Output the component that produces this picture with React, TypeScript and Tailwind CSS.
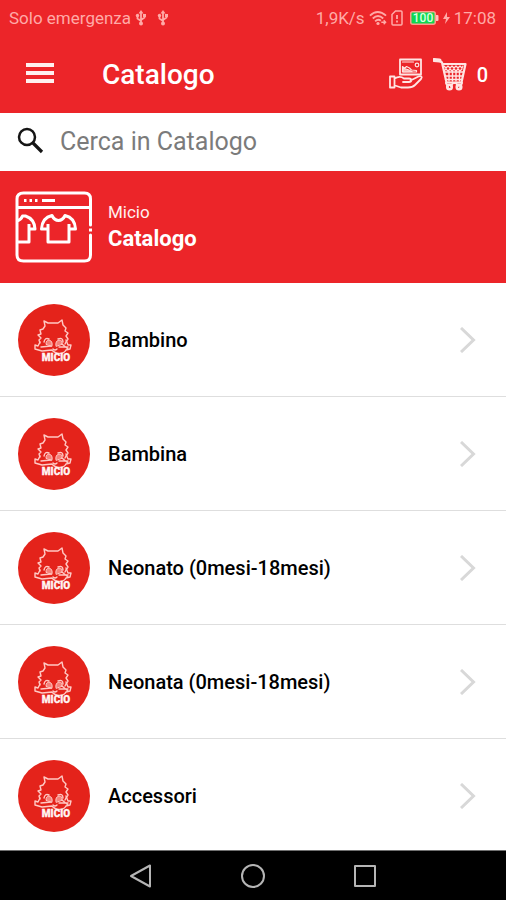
import React from "react";

const categories = [
  "Bambino",
  "Bambina",
  "Neonato (0mesi-18mesi)",
  "Neonata (0mesi-18mesi)",
  "Accessori",
];

function UsbIcon() {
  return (
    <svg className="h-[18px] w-3" viewBox="0 0 12 18" fill="none" stroke="currentColor" strokeWidth="1.800" aria-hidden="true">
      <path d="M6 3v11M6 12L2.500 9.500V7M6 11l3.500-2.500V6" />
      <path d="M6 1l2.500 3.500h-5z" fill="currentColor" stroke="none" />
      <circle cx="6" cy="14.500" r="2" fill="currentColor" stroke="none" />
      <circle cx="2.500" cy="6.500" r="1.700" fill="currentColor" stroke="none" />
      <path d="M8 5h3v3H8z" fill="currentColor" stroke="none" />
    </svg>
  );
}

function WifiIcon() {
  return (
    <svg className="h-[18px] w-[18px]" viewBox="0 0 19 18" fill="none" stroke="currentColor" strokeWidth="2" aria-hidden="true">
      <path d="M1 6.500Q9 -1 18 6.500M4 9.500Q9.500 4.500 15 9.500M6.500 12.500Q9.500 9.500 12.500 12" />
      <circle cx="9.500" cy="14.800" r="1.700" fill="currentColor" stroke="none" />
      <path d="M13 13.500h5M15.500 11.500l2 2-2 2" strokeWidth="1.500" />
    </svg>
  );
}

function SimIcon() {
  return (
    <svg className="h-4 w-3" viewBox="0 0 12 16" fill="none" stroke="currentColor" strokeWidth="1.500" aria-hidden="true">
      <path d="M1 4.500L4.500 1H10q1 0 1 1v12q0 1-1 1H2q-1 0-1-1z" />
      <path d="M6 5v4M6 10.500v2" strokeWidth="1.800" />
    </svg>
  );
}

function Battery() {
  return (
    <svg className="h-[14px] w-[29px]" viewBox="0 0 29 14" role="img" aria-label="100%">
      <rect x="0.750" y="0.750" width="24.500" height="12.500" rx="2" fill="#0fd850" stroke="#ff9a8c" strokeWidth="1.500" />
      <path d="M26 4h1.500q1 0 1 1v4q0 1-1 1H26z" fill="#ffc0bd" />
      <text x="13" y="11" textAnchor="middle" fontFamily="Roboto, sans-serif" fontWeight="500" fontSize="12" fill="#d9ffe2">100</text>
    </svg>
  );
}

function HandCardIcon() {
  return (
    <svg className="h-[34px] w-9" viewBox="1 1 36 34" fill="none" stroke="#ffe5e3" strokeWidth="1.800" strokeLinejoin="round" strokeLinecap="round" aria-hidden="true">
      <path d="M12 2.500h21v15H12z" />
      <path d="M14.500 5h11M14.500 15V9.500l2 2 2-2 3 1.500 2 2 5 .5v1.500z" strokeWidth="1.200" />
      <path d="M15 14.500v-3l3 .5 3 1 3 1.500z" fill="#ffb9b5" strokeWidth="1" />
      <circle cx="29" cy="8" r="1.800" strokeWidth="1.200" />
      <path d="M2 19.500h4.500v11H2zM6.500 21.500c4-2.500 7-2 9.500 0h5c3 0 3 3.500 0 3.500h-6M22.500 23.500l8-4c3-1 4 .5 2.500 2.500l-6 6c-2 2-4 2.500-7 2.500h-7l-6-2" />
    </svg>
  );
}

function CartIcon() {
  return (
    <svg className="h-[34px] w-9" viewBox="1 1 36 34" fill="none" stroke="#ffe5e3" strokeLinejoin="round" strokeLinecap="round" aria-hidden="true">
      <path d="M2 3l5.500 .5" strokeWidth="4" />
      <path d="M7 3.500l3 2 4.500 20H29M10.500 7H33.500l-4 18.500" strokeWidth="2.200" />
      <path d="M12 9l2 2 2-2 2 2 2-2 2 2 2-2 2 2 2-2 2 2 1-2M12 14l2-2 2 2 2-2 2 2 2-2 2 2 2-2 2 2 2-2" strokeWidth="1.200" />
      <path d="M12.500 15H31M13 19h18M13.500 22.500H30M17 14v10M20.500 14v10M24 14v10M27.500 14v10" strokeWidth="1.400" />
      <path d="M14 26l2 4M30 26l-2 4M19 29l2-3h3l2 3" strokeWidth="2" />
      <circle cx="17.500" cy="30" r="2.300" strokeWidth="2.500" />
      <circle cx="27" cy="30" r="2.300" strokeWidth="2.500" />
    </svg>
  );
}

function CatalogIcon() {
  return (
    <svg className="h-[72px] w-[78px] shrink-0" viewBox="0 0 78 72" fill="none" stroke="white" strokeWidth="3" strokeLinejoin="round" aria-hidden="true">
      <path d="M75.500 34V8q0-6-6-6H8.500Q2 2 2 8v56q0 6 6.500 6h61q6 0 6-6V44M2 16.500h73.500" strokeLinecap="round" />
      <path d="M74 39h3M9 9.500h2.500M14.500 9.500H17M20 9.500h2.500M27 9.500h13" />
      <path d="M2 30q4-1 5.500-5l3 0q9 3 9.500 13h-6v-5M14 36v15H2" />
      <path d="M37 24.500C30 26 27 30 26.500 38H33v13h21V38h6.500C60 30 57 26 50 24.500C47 31 40 31 37 24.500zM33 38v-5M54 38v-5" />
    </svg>
  );
}

function MicioBadge() {
  return (
    <svg className="h-[72px] w-[72px] shrink-0" viewBox="0 0 72 72" fill="none" aria-hidden="true">
      <circle cx="36" cy="36" r="36" fill="#e4231b" />
      <g stroke="#ffc9c4" strokeWidth="1.400" strokeLinejoin="round" strokeLinecap="round">
        <path d="M22 39l-1-3 2-2-3-3 3-1-1-4 3-1 2-3-1-5 4 2 5 0 5 0 4-3 1 5 3 3-1 3 3 2-2 3 2 3-2 3-1 2" />
        <path d="M22 38l-2 4-3-1 0 4 7 2 10-1c4 5 12 4 14 0M48 36l2 5 3 0-1 4-4 1" />
        <path d="M26 38q1-5 5-3M40 35q5-2 5 3" />
        <path d="M28 40q0-4 3-4 4 1 3 6zM38 42q-1-5 3-6 4 0 3 4z" fill="#f4827b" strokeWidth="1" />
        <path d="M23 43l10-1M41 43l9 0M44 40l6 5M35 45q2 2 4 0" />
      </g>
      <text x="38" y="57" textAnchor="middle" fontFamily="Roboto, sans-serif" fontWeight="900" fontSize="10" fill="#fff5f3" stroke="#fff5f3" strokeWidth="0.300">MICIO</text>
    </svg>
  );
}

export default function App() {
  return (
    <div className="flex min-h-screen flex-col bg-white font-[Roboto,sans-serif] text-black">
      <header className="bg-[#ec2529] text-white">
        <div className="flex h-9 items-center justify-between pr-[10px] pl-[9px] text-[17px] leading-6 text-[#ffaaa7]">
          <div className="flex items-center gap-1">
            <span>Solo emergenza</span>
            <UsbIcon />
            <span className="pl-[6px]"><UsbIcon /></span>
          </div>
          <div className="flex items-center gap-1">
            <span>1,9K/s</span>
            <WifiIcon />
            <SimIcon />
            <span className="pl-[3px]"><Battery /></span>
            <svg className="h-3 w-[7px]" viewBox="0 0 7 12" fill="currentColor" aria-hidden="true">
              <path d="M4 0L0 7h3l-1 5 5-7H4z" />
            </svg>
            <span>17:08</span>
          </div>
        </div>
        <div className="flex h-[77px] items-center pr-[18px] pl-[26px]">
          <button type="button" aria-label="Menu" className="flex w-7 flex-col gap-1 pb-[3px]">
            <span className="h-1 bg-[#fff0ef]" />
            <span className="h-1 bg-[#fff0ef]" />
            <span className="h-1 bg-[#fff0ef]" />
          </button>
          <h1 className="ml-12 flex-1 text-[28px] leading-8 font-medium">Catalogo</h1>
          <button type="button" aria-label="Ordini"><HandCardIcon /></button>
          <button type="button" aria-label="Carrello" className="ml-2 flex items-center gap-2 text-[20px] leading-6 font-medium">
            <CartIcon />
            <span>0</span>
          </button>
        </div>
      </header>

      <label className="flex h-[58px] items-center gap-4 pl-[17px]">
        <svg className="h-[31px] w-[27px] shrink-0" viewBox="0 0 27 31" fill="none" stroke="#151515" aria-hidden="true">
          <circle cx="10" cy="10" r="8" strokeWidth="2.500" />
          <path d="M15.500 15.500L25 25" strokeWidth="3.200" />
        </svg>
        <input
          type="search"
          aria-label="Cerca in Catalogo"
          placeholder="Cerca in Catalogo"
          className="min-w-0 flex-1 bg-transparent text-[25px] leading-8 outline-none placeholder:text-[#7b7b7b]"
        />
      </label>

      <section className="flex h-28 items-center gap-[15px] bg-[#ec2529] pl-[15px] text-white">
        <CatalogIcon />
        <div>
          <p className="text-[17px] leading-6 text-[#fff0ef]">Micio</p>
          <h2 className="text-[22px] leading-[30px] font-bold">Catalogo</h2>
        </div>
      </section>

      <ul className="flex-1">
        {categories.map((name) => (
          <li key={name} className="border-b border-[#dedede] last:border-b-0">
            <button type="button" className="flex w-full items-center gap-[18px] pt-[21px] pr-[30px] pb-5 pl-[18px] text-left">
              <MicioBadge />
              <span className="flex-1 text-[20px] leading-6 font-medium">{name}</span>
              <svg className="h-[26px] w-4" viewBox="0 0 16 26" fill="none" stroke="#d8d8d8" strokeWidth="3" aria-hidden="true">
                <path d="M1 1l12.500 12L1 25" />
              </svg>
            </button>
          </li>
        ))}
      </ul>

      <nav className="-mt-[2px] flex h-[50px] items-center justify-center gap-[88px] border-t border-[#707070] bg-black text-[#b5b5b5]">
        <button type="button" aria-label="Indietro">
          <svg className="h-6 w-6" viewBox="0 0 24 24" fill="none" stroke="currentColor" strokeWidth="2" strokeLinejoin="round">
            <path d="M21 1.500v21L2 12z" />
          </svg>
        </button>
        <button type="button" aria-label="Home">
          <svg className="h-6 w-6" viewBox="0 0 24 24" fill="none" stroke="currentColor" strokeWidth="2">
            <circle cx="12" cy="12" r="11" />
          </svg>
        </button>
        <button type="button" aria-label="Recenti">
          <svg className="h-6 w-6" viewBox="0 0 24 24" fill="none" stroke="currentColor" strokeWidth="2" strokeLinejoin="round">
            <path d="M2 2h20v20H2z" />
          </svg>
        </button>
      </nav>
    </div>
  );
}
